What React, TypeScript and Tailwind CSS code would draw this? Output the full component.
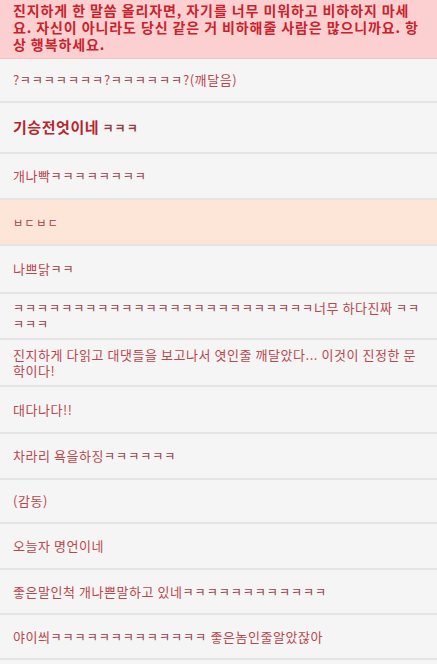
import React from "react";

const K = ({ n, bold }: { n: number; bold?: boolean }) => (
  <span
    className={`text-[12px] tracking-[1px] text-[#963f4b] ${bold ? "font-bold" : ""}`}
  >
    {"ㅋ".repeat(n)}
  </span>
);

const Row = ({
  children,
  peach,
  h = "min-h-[46px]",
}: {
  children: React.ReactNode;
  peach?: boolean;
  h?: string;
}) => (
  <div
    className={`flex items-center px-[13px] py-[6px] border-b-2 border-[#e4e4e4] ${h} ${
      peach ? "bg-[#fde6d7]" : "bg-[#f5f5f5]"
    }`}
  >
    <p className="text-[13px] leading-[16px] tracking-[0.55px] text-[#b9474e]">{children}</p>
  </div>
);

export default function App() {
  return (
    <div
      className="min-h-screen w-full bg-[#f5f5f5]"
      style={{ fontFamily: '"Noto Sans CJK KR", "Noto Sans", sans-serif' }}
    >
      <div className="bg-[#fcd0d0] px-[13px] pt-[2px] pb-[5px] border-b border-[#f0c4c4]">
        <p className="text-[14px] leading-[17px] tracking-[0.9px] font-bold text-[#c9222d]">
          진지하게 한 말씀 올리자면, 자기를 너무 미워하고 비하하지 마세요. 자신이 아니라도 당신 같은 거 비하해줄 사람은 많으니까요. 항상 행복하세요.
        </p>
      </div>
      <Row h="min-h-[44px]">
        ?<K n={7} />?<K n={6} />?(깨달음)
      </Row>
      <Row h="min-h-[51px]">
        <span className="text-[15px] font-bold text-[#b5262f]">기승전엇이네</span>{" "}
        <K n={3} bold />
      </Row>
      <Row>
        개나빡<K n={8} />
      </Row>
      <Row peach>
        <span className="text-[11px] tracking-[1.5px] text-[#a03a4c]">ㅂㄷㅂㄷ</span>
      </Row>
      <Row h="min-h-[48px]">
        나쁘닭<K n={2} />
      </Row>
      <Row h="min-h-[45px]">
        <K n={25} />너무 하다진짜 <K n={2} />
        <K n={3} />
      </Row>
      <Row h="min-h-[47px]">
        진지하게 다읽고 대댓들을 보고나서 엿인줄 깨달았다... 이것이 진정한 문학이다!
      </Row>
      <Row h="min-h-[47px]">대다나다!!</Row>
      <Row>
        차라리 욕을하징<K n={6} />
      </Row>
      <Row h="min-h-[44px]">(감동)</Row>
      <Row>오늘자 명언이네</Row>
      <Row h="min-h-[45px]">
        좋은말인척 개나쁜말하고 있네<K n={12} />
      </Row>
      <Row h="min-h-[45px]">
        야이씌<K n={13} /> 좋은놈인줄알았잖아
      </Row>
    </div>
  );
}
